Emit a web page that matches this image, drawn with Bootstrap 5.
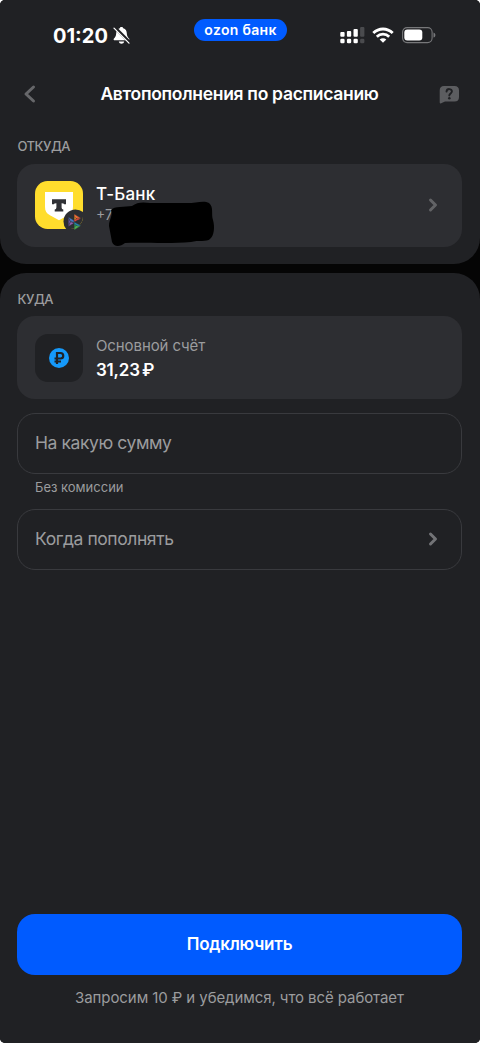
<!DOCTYPE html>
<html lang="ru">
<head>
<meta charset="utf-8">
<meta name="viewport" content="width=device-width, initial-scale=1">
<title>Автопополнения по расписанию</title>
<link href="https://cdn.jsdelivr.net/npm/bootstrap@5.3.0/dist/css/bootstrap.min.css" rel="stylesheet">
<style>
html{background:#fff}
body{background:#fff;font-family:Inter,"Noto Sans",sans-serif;color:#fff;overflow:hidden}
.screen{height:1043px;background:#050505;border-radius:5px;overflow:hidden}
.panel{background:#202124}
.panel-top{height:264px;border-radius:0 0 26px 26px}
.panel-main{border-radius:26px 26px 0 0;margin-top:9px;padding-top:17px}
.status{height:72px;padding:20px 44px 0 53px}
.clock{font-size:20px;font-weight:700;line-height:32px}
.pill{width:93px;height:22px;background:#005bff;left:194px;top:19px;font-size:14px;font-weight:600;line-height:21px;letter-spacing:.3px}
.title-bar{height:44px;padding:0 20px 0 22px}
.title{font-size:17.5px;font-weight:600;line-height:24px;letter-spacing:-.3px;padding-left:4px}
.section-label{font-size:13px;font-weight:500;line-height:18px;color:#9b9c9e;letter-spacing:-.5px;padding-left:.5px}
.tile{height:83px;border-radius:18px;background:#2d2e32;padding:0 18px}
.logo-box{width:48px;height:48px}
.account-box{border-radius:13px;background:#202124}
.name{font-size:17px;font-weight:500;line-height:24px;letter-spacing:.2px;margin-top:-4px}
.phone{font-size:14px;line-height:18px;color:#9b9c9e}
.scribble{left:91px;top:35px}
.muted{color:#9b9c9e}
.account-name{font-size:15px;line-height:24px;letter-spacing:-.1px}
.amount{font-size:17px;font-weight:600;line-height:24px;letter-spacing:-.2px;word-spacing:-2px}
.field{height:61px;border:1px solid #393a3e;border-radius:18px;padding:0 17px;font-size:17.5px;letter-spacing:-.42px}
.hint{font-size:13px;line-height:18px;margin:4px 0 13px 18px}
.submit{height:61px;border-radius:18px;background:#005bff;color:#fff;font-size:17px;font-weight:600;letter-spacing:-.2px}
.note{font-size:15px;line-height:22px;margin:12px 0 34px;letter-spacing:-.08px}
.side{padding-left:17px;padding-right:18px}
</style>
</head>
<body>
<main class="screen d-flex flex-column">
  <section class="panel panel-top flex-shrink-0">
    <div class="status d-flex position-relative">
      <span class="clock">01:20</span>
      <svg class="ms-1" style="margin-top:6px" width="19" height="19" viewBox="0 0 19 19" fill="#fff"><path d="M9.500 1C8.500 1 8 1.500 7.800 2.300C5 3 4.300 5.200 4.200 7.300C4.100 10 3.400 11 2 12.500C1.300 13.300 1.600 14.300 2.700 14.300H16.300C17.400 14.300 17.700 13.300 17 12.500C15.600 11 14.900 10 14.800 7.300C14.700 5.200 14 3 11.200 2.300C11 1.500 10.500 1 9.500 1ZM6.800 15.500C7.100 17 8.200 17.700 9.500 17.700S11.900 17 12.200 15.500Z"/><path d="M2.800 1.400L18 16.700" stroke="#202124" stroke-width="3"/><path d="M2 2.100L17 17.100" stroke="#fff" stroke-width="1.300" stroke-linecap="round"/></svg>
      <div class="pill position-absolute rounded-pill text-center"><span>ozon банк</span></div>
      <div class="d-flex ms-auto">
        <svg width="25" height="18" viewBox="0 0 25 18" fill="#fff" style="margin:7px 7px 0 0"><rect x=".3" y="5" width="4.300" height="4.700" rx="1"/><rect x="6.900" y="4" width="4.300" height="5.700" rx="1"/><rect x="13.500" y="2" width="4.300" height="7.700" rx="1"/><rect x=".3" y="11.800" width="4.300" height="4.500" rx="1.300"/><rect x="6.900" y="11.800" width="4.300" height="4.500" rx="1.300"/><rect x="13.500" y="11.800" width="4.300" height="4.500" rx="1.300"/><g fill="#4a4b4e"><rect x="20.100" y="0" width="4.300" height="9.700" rx="1"/><rect x="20.100" y="11.800" width="4.300" height="4.500" rx="1.300"/></g></svg>
        <svg width="22" height="17" viewBox="0 0 22 17" style="margin:7px 8px 0 0" fill="none" stroke="#fff" stroke-width="2.800"><path d="M1.300 6.100C6.800 .600 15.200 .600 20.700 6.100"/><path d="M4.800 9.700C8.300 6.300 13.700 6.300 17.200 9.700"/><path d="M11 15.700L7.700 12.400C9.500 10.700 12.500 10.700 14.300 12.400Z" fill="#fff" stroke="none"/></svg>
        <svg width="34" height="17" viewBox="0 0 34 17" style="margin-top:7px"><rect x=".600" y=".600" width="29.500" height="15" rx="4.500" fill="none" stroke="#77787a" stroke-width="1.100"/><rect x="2.300" y="2.600" width="18" height="11" rx="3" fill="#fff"/><path d="M31.500 5.400C34 6.200 34 9.800 31.500 10.600Z" fill="#77787a"/></svg>
      </div>
    </div>
    <header class="title-bar d-flex align-items-center justify-content-between">
      <svg width="14" height="20" viewBox="0 0 14 20" fill="none" stroke="#66676a" stroke-width="3" stroke-linecap="round" stroke-linejoin="round"><path d="M11.500 3L4 10L11.500 17"/></svg>
      <h1 class="title m-0"><span>Автопополнения по расписанию</span></h1>
      <svg width="21" height="19" viewBox="0 0 21 19"><path d="M5 1H15.500Q20 1 20 5.500V12Q20 16.500 15.500 16.500H6L2.200 18.300Q.700 18.800.700 17.200V5.500Q.700 1 5 1Z" fill="#5c5d60"/><path d="M7.500 6.600C7.800 3.100 13 3.400 12.900 6.500C12.800 8.400 10.300 8.500 10.300 10.500" fill="none" stroke="#202124" stroke-width="1.900" stroke-linecap="round"/><circle cx="10.300" cy="13.300" r="1.250" fill="#202124"/></svg>
    </header>
    <div class="side" style="padding-top:21px">
      <div class="section-label"><span>ОТКУДА</span></div>
      <div class="tile d-flex align-items-center position-relative" style="margin-top:8.500px">
        <svg class="logo-box" viewBox="0 0 48 48"><defs><clipPath id="logoClip"><rect width="48" height="48" rx="12.500"/></clipPath></defs><rect width="48" height="48" rx="12.500" fill="#ffdd2d"/><path d="M10 11H38V26C38 30 36.500 32.300 33 34.300L24 39.300L15 34.300C11.500 32.300 10 30 10 26Z" fill="#fff"/><path d="M17 18.300H31V23.300H29.200Q29 22.200 26.600 22.200V26.500Q26.600 28.400 28.300 28.600V30.500H19.700V28.600Q21.400 28.400 21.400 26.500V22.200Q19 22.200 18.800 23.300H17Z" fill="#303136"/><circle cx="40.500" cy="40.500" r="12" fill="#2d2e32" clip-path="url(#logoClip)"/></svg>
        <svg class="position-absolute" style="left:50px;top:49px" width="16" height="18" viewBox="0 0 16 18" stroke="#2d2e32" stroke-width=".4"><path d="M1.300 4L3.600 8.800L1.300 13.500Z" fill="#6757a5"/><path d="M1.300 4L7.300 7.500V10L5.300 8.900L3.600 8.800Z" fill="#4975bd"/><path d="M1.300 13.500L3.600 8.800L7.300 10Z" fill="#9161ae"/><path d="M7.200 1V8.800L9.200 6.900V4.500Z" fill="#ef9e24"/><path d="M7.200 1L14 5.300L11.300 7L7.200 3.600Z" fill="#f06b35"/><path d="M7.200 9L14 5.300L10.700 5.200L7.200 7Z" fill="#e8443e"/><path d="M7.200 9V17L9.200 13.500V11Z" fill="#25a75a"/><path d="M7.200 17L14 12.800L11 11.100L7.200 14.300Z" fill="#4daf50"/><path d="M7.200 9L14 12.800L11 13.100L7.200 11Z" fill="#238bb8"/></svg>
        <div style="margin-left:13px">
          <div class="name"><span>Т-Банк</span></div>
          <div class="phone"><span>+7</span></div>
        </div>
        <svg class="ms-auto" style="margin-right:3px" width="16" height="18" viewBox="0 0 16 18" fill="none" stroke="#626366" stroke-width="3" stroke-linecap="round" stroke-linejoin="round"><path d="M5.500 4L10.500 9L5.500 14"/></svg>
        <svg class="scribble position-absolute" width="109" height="49" viewBox="0 0 109 49"><path d="M3 11C6 7 17 8 24 7C29 3 35 3 42 4L79 4C88 4 96 1 101 4C106 8 103 15 105 21C107 28 106 37 102 40C99 43 90 41 83 43C60 45 34 43 17 44C12 48 6 48 4 43L1 27C1 20 5 18 3 11Z" fill="#000"/></svg>
      </div>
    </div>
  </section>

  <section class="panel panel-main side d-flex flex-column flex-grow-1">
    <div class="section-label"><span>КУДА</span></div>
    <div class="tile d-flex align-items-center flex-shrink-0" style="margin-top:8.400px">
      <div class="logo-box account-box d-flex align-items-center justify-content-center">
        <svg width="20" height="20" viewBox="0 0 20 20"><circle cx="10" cy="10" r="10" fill="#1599fa"/><path d="M8 16V5H11.400C15.200 5 15.200 10.500 11.400 10.500H5.500M5.500 13.500H12" fill="none" stroke="#202124" stroke-width="2.200"/></svg>
      </div>
      <div style="margin-left:13px">
        <div class="account-name muted"><span>Основной счёт</span></div>
        <div class="amount"><span>31,23 ₽</span></div>
      </div>
    </div>
    <div class="field muted d-flex align-items-center flex-shrink-0" style="margin-top:13.400px"><span>На какую сумму</span></div>
    <div class="hint muted"><span>Без комиссии</span></div>
    <div class="field muted d-flex align-items-center flex-shrink-0"><span>Когда пополнять</span>
      <svg class="ms-auto" style="margin-right:3px" width="16" height="18" viewBox="0 0 16 18" fill="none" stroke="#727376" stroke-width="3" stroke-linecap="round" stroke-linejoin="round"><path d="M5.500 4L10.500 9L5.500 14"/></svg>
    </div>
    <button class="submit btn w-100 mt-auto border-0 flex-shrink-0 p-0" type="button"><span>Подключить</span></button>
    <p class="note muted text-center"><span>Запросим 10 ₽ и убедимся, что всё работает</span></p>
  </section>
</main>
<script src="https://cdn.jsdelivr.net/npm/bootstrap@5.3.0/dist/js/bootstrap.bundle.min.js"></script>
</body>
</html>
